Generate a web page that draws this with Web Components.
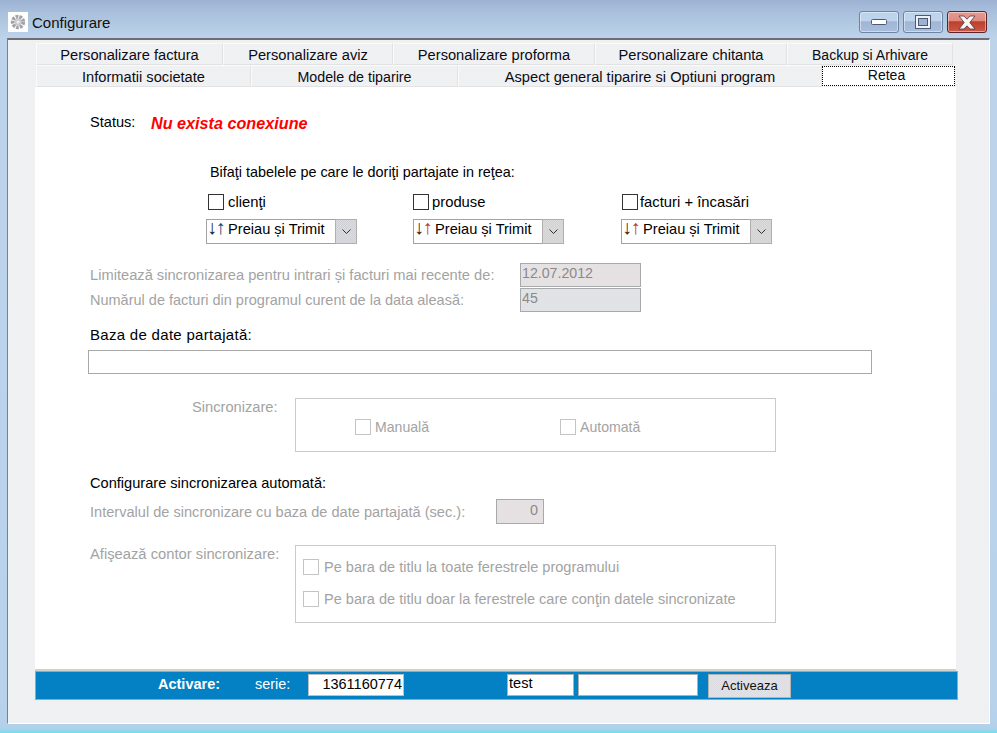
<!DOCTYPE html>
<html><head><meta charset="utf-8">
<style>
html,body{margin:0;padding:0;height:100%;overflow:hidden;background:#b4cde6}
body{font-family:"Liberation Sans",Arial,sans-serif}
</style></head><body>
<template id="t-window"><style>
:host{display:flex;flex-direction:column;width:997px;height:733px;box-sizing:border-box;color:#000;
 background:linear-gradient(180deg,#9db2d2 0,#a9c0dc 12px,#bcd3ea 38px,#b9d2ec 700px,#b3d0ea 728px,#6fe0ee 733px)}
.bar{height:38px;flex:none;display:flex;align-items:center;padding:0 10px 0 8px;box-sizing:border-box}
.ico{width:20px;height:20px;background:#fff;flex:none;margin-right:4px;display:block;margin-top:6px}
.title{font-size:15px;flex:1;margin-top:6px;color:#101010}
.btns{display:flex;gap:4px;margin-top:6px}
.b{width:40px;height:22px;box-sizing:border-box;border:1px solid #6f84a4;border-radius:3px;display:flex;align-items:center;justify-content:center;
 box-shadow:inset 0 0 0 1px rgba(255,255,255,.45);background:linear-gradient(180deg,#bcd2ec 0,#c0d4ec 46%,#9fb6d4 48%,#a9bedc 100%)}
.b.x{border-color:#5e2228;background:linear-gradient(180deg,#e79a90 0,#dd8a80 46%,#bd3f2b 48%,#c75a48 100%)}
.body{flex:none;height:686px;margin:0 7px 0 7px;box-sizing:border-box;border-top:2px solid #6e6e78;border-left:1px solid #7c8088;border-right:1px solid #fff;border-bottom:1px solid #fff;
 background:#f1f0f1 repeating-conic-gradient(#f4f1f1 0 25%,#eeeff0 0 50%) 0 0/2px 2px;padding:3px 32px 0 27px;display:flex;flex-direction:column}
</style>
<div class="bar">
<svg class="ico" viewBox="0 0 20 20"><circle cx="10" cy="10" r="5.2" fill="none" stroke="#a2a2a8" stroke-width="4" stroke-dasharray="2.6 1"/><circle cx="10" cy="10" r="3.4" fill="#c9cdd0"/><circle cx="10" cy="10" r="1.5" fill="#eef0f2"/></svg>
<span class="title"><slot name="title"></slot></span>
<div class="btns">
<div class="b"><svg width="16" height="6" viewBox="0 0 16 6"><rect x=".5" y=".5" width="15" height="5" rx="1" fill="#fff" stroke="#4c5a74"/></svg></div>
<div class="b"><svg width="16" height="14" viewBox="0 0 16 14"><rect x=".5" y=".5" width="15" height="13" fill="#eef2f8" stroke="#4c5a74"/><rect x="3.5" y="3.5" width="9" height="7" fill="#9db2d0" stroke="#4c5a74"/></svg></div>
<div class="b x"><svg width="20" height="15" viewBox="0 0 20 15"><path d="M2 1H7L10 4.2 13 1H18L12.8 7.5 18 14H13L10 10.8 7 14H2L7.2 7.5Z" fill="#f6f6f6" stroke="#5a3436" stroke-width=".8"/></svg></div>
</div></div>
<div class="body"><slot></slot></div>
</template>

<template id="t-tabs"><style>
:host{display:block;font-size:14.67px}
.r{display:grid;height:22px}
.r1{grid-template-columns:187px 170px 202px 192px 166px;width:917px;margin-left:1px}
.r2{grid-template-columns:215px 207px 364px 133px;width:920px;margin-left:1px}
.t{box-sizing:border-box;border:1px solid #e2e2e2;border-left-color:#fbfbfb;border-top-color:#fbfbfb;text-align:center;line-height:22px;height:22px;color:#0b0b14;white-space:nowrap}
.on{background:#fff;border:1px dotted #000;line-height:17px;height:20px;margin-top:1px;padding-right:4px;font-size:14px}
</style>
<div class="r r1"><div class="t">Personalizare factura</div><div class="t">Personalizare aviz</div><div class="t">Personalizare proforma</div><div class="t">Personalizare chitanta</div><div class="t" style="font-size:14px">Backup si Arhivare</div></div>
<div class="r r2"><div class="t">Informatii societate</div><div class="t" style="font-size:14.25px">Modele de tiparire</div><div class="t">Aspect general tiparire si Optiuni program</div><div class="t on">Retea</div></div>
</template>

<template id="t-check"><style>
:host{display:inline-flex;align-items:center;font-size:14.8px;line-height:16px;white-space:nowrap}
i{width:16px;height:16px;box-sizing:border-box;border:1px solid #333;display:block;margin-right:var(--gap,3px);flex:none}
:host([off]){color:#a3a3a3;font-size:14.1px}
:host([off]) i{border-color:#c4c4c4}
</style><i></i><slot></slot></template>

<template id="t-combo"><style>
:host{display:flex;width:151px;height:25px;box-sizing:border-box;border:1px solid #a2a2a2;background:#fff;font-size:14.6px;align-items:center}
.txt{flex:1;white-space:nowrap;padding-bottom:5px;line-height:16px}
.d,.u{font-size:20px;line-height:0;letter-spacing:-1.5px}
.d{color:var(--down,#1c2430)}.u{color:var(--up,#0c4a70)}
.a{width:20px;height:23px;background:#d8d8da repeating-conic-gradient(#dcdcdc 0 25%,#cfd1d6 0 50%) 0 0/2px 2px;display:flex;align-items:center;justify-content:center;flex:none;box-shadow:0 0 0 1px #b0b0b0}
</style><span class="txt"><span class="d">↓</span><span class="u">↑</span> <slot></slot></span><span class="a"><svg width="9" height="5" viewBox="0 0 9 5"><path d="M.5.5 4.5 4.5 8.5.5" fill="none" stroke="#333"/></svg></span></template>

<template id="t-field"><style>
:host{display:block;box-sizing:border-box;height:24px;border:1px solid #a8a8a8;font-size:14.4px;line-height:20px;padding:0 2px;background:#fff;color:#000;white-space:nowrap}
:host([off]){background:#e4e2e4 repeating-conic-gradient(#e8e4e6 0 25%,#dfe0e4 0 50%) 0 0/2px 2px;color:#8a8a8a;border-color:#a6aaaa}
</style><slot></slot></template>

<template id="t-group"><style>
:host{display:block;box-sizing:border-box;border:1px solid #c8ccc8;width:481px}
</style><slot></slot></template>

<template id="t-panel"><style>
:host{display:block;background:#fff;box-sizing:border-box;width:921px;height:584px;border-bottom:2px solid #d0d2cc;font-size:14px;flex:none}
.in{padding:0 0 0 55px}
</style><div class="in"><slot></slot></div></template>

<template id="t-row"><style>
:host{display:flex;align-items:center;font-size:14.4px;white-space:nowrap}
</style><slot></slot></template>

<template id="t-bar"><style>
:host{display:flex;align-items:center;box-sizing:border-box;width:923px;height:29px;background:#0480c4;border:1px solid #9aa6ac;color:#fff;font-size:14.4px;padding:0 0 1px 122px;flex:none}
</style><slot></slot></template>

<app-window>
<span slot="title">Configurare</span>
<app-tabs></app-tabs>
<app-panel>
 <app-row style="height:20px;margin-top:25px"><span style="width:61px;font-size:14.6px">Status:</span><b style="color:#f00;font-style:italic;font-size:16.2px;margin-top:3px">Nu exista conexiune</b></app-row>
 <app-row style="height:18px;margin-top:31px;padding-left:122px;margin-left:-2px">Bifaţi tabelele pe care le doriţi partajate in reţea:</app-row>
 <div style="display:grid;grid-template-columns:205px 209px 160px;margin:13px 0 0 118px">
  <app-check style="--gap:4px">clienţi</app-check><app-check>produse</app-check><app-check style="--gap:2px">facturi + încasări</app-check>
 </div>
 <div style="display:grid;grid-template-columns:207px 208px 160px;margin:9px 0 0 116px">
  <app-combo>Preiau și Trimit</app-combo><app-combo style="--up:#b83a1c;--down:#4a2018">Preiau și Trimit</app-combo><app-combo style="--up:#b83a1c;--down:#4a2018">Preiau și Trimit</app-combo>
 </div>
 <div style="display:grid;grid-template-columns:430px 121px;margin-top:19px;color:#a3a3a3;font-size:14.6px;align-items:center;row-gap:1px">
  <span style="font-size:14.68px">Limitează sincronizarea pentru intrari și facturi mai recente de:</span><app-field off style="padding:0 1px;line-height:19px;font-size:14.2px">12.07.2012</app-field>
  <span style="font-size:14.5px">Numărul de facturi din programul curent de la data aleasă:</span><app-field off style="padding:0 1px;line-height:19px;font-size:14.2px">45</app-field>
 </div>
 <div style="margin-top:14px;height:18px;line-height:18px;font-size:15px;letter-spacing:.3px">Baza de date partajată:</div>
 <app-field style="width:784px;margin:6px 0 0 -2px;height:24px"></app-field>
 <div style="display:flex;margin-top:24px;color:#a3a3a3;font-size:14.67px">
  <span style="width:103px;margin-left:102px;padding-top:1px">Sincronizare:</span>
  <app-group style="height:54px;display:flex;align-items:center;padding:4px 0 0 59px">
   <app-check off style="width:205px;--gap:4px">Manuală</app-check><app-check off style="--gap:4px">Automată</app-check>
  </app-group>
 </div>
 <div style="margin-top:22px;height:18px;line-height:18px;font-size:14.6px">Configurare sincronizarea automată:</div>
 <div style="display:flex;align-items:center;margin-top:7px;color:#a3a3a3;font-size:14.58px">
  <span style="width:406px">Intervalul de sincronizare cu baza de date partajată (sec.):</span>
  <app-field off style="width:48px;height:25px;text-align:right;padding-right:5px;line-height:21px">0</app-field>
 </div>
 <div style="display:flex;margin-top:21px;color:#a3a3a3;font-size:14.75px">
  <span style="width:205px;padding-top:1px">Afişează contor sincronizare:</span>
  <app-group style="height:78px;padding:13px 0 0 7px;display:flex;flex-direction:column;gap:16px">
   <app-check off style="--gap:5px;font-size:14.55px">Pe bara de titlu la toate ferestrele programului</app-check>
   <app-check off style="--gap:5px;font-size:14.55px">Pe bara de titlu doar la ferestrele care conţin datele sincronizate</app-check>
  </app-group>
 </div>
</app-panel>
<app-bar>
 <b style="width:97px;margin-top:-2px;font-size:14.5px">Activare:</b><span style="width:53px;margin-top:-2px">serie:</span>
 <app-field style="width:96px;height:22px;text-align:right;padding-right:1px;line-height:18px;border-color:#c0c0c0;font-size:14.5px">1361160774</app-field>
 <span style="width:103px"></span>
 <app-field style="width:67px;height:22px;line-height:17px;padding:0 1px;border-color:#b0b0b0;font-size:14.6px">test</app-field>
 <app-field style="width:120px;height:22px;margin-left:4px;border-color:#b0b0b0"></app-field>
 <span style="width:83px;height:24px;margin:1px 0 0 10px;box-sizing:border-box;background:#e2e0e2 repeating-conic-gradient(#e6e2e4 0 25%,#dcdde2 0 50%) 0 0/2px 2px;border:1px solid #b4b4b4;color:#111;font-size:13px;line-height:22px;text-align:center">Activeaza</span>
</app-bar>
</app-window>
<script>
const map={'app-window':'t-window','app-tabs':'t-tabs','app-check':'t-check','app-combo':'t-combo','app-field':'t-field','app-group':'t-group','app-panel':'t-panel','app-row':'t-row','app-bar':'t-bar'};
for(const [n,id] of Object.entries(map)){
 customElements.define(n,class extends HTMLElement{constructor(){super();this.attachShadow({mode:'open'}).appendChild(document.getElementById(id).content.cloneNode(true));}});
}
</script>
</body></html>
